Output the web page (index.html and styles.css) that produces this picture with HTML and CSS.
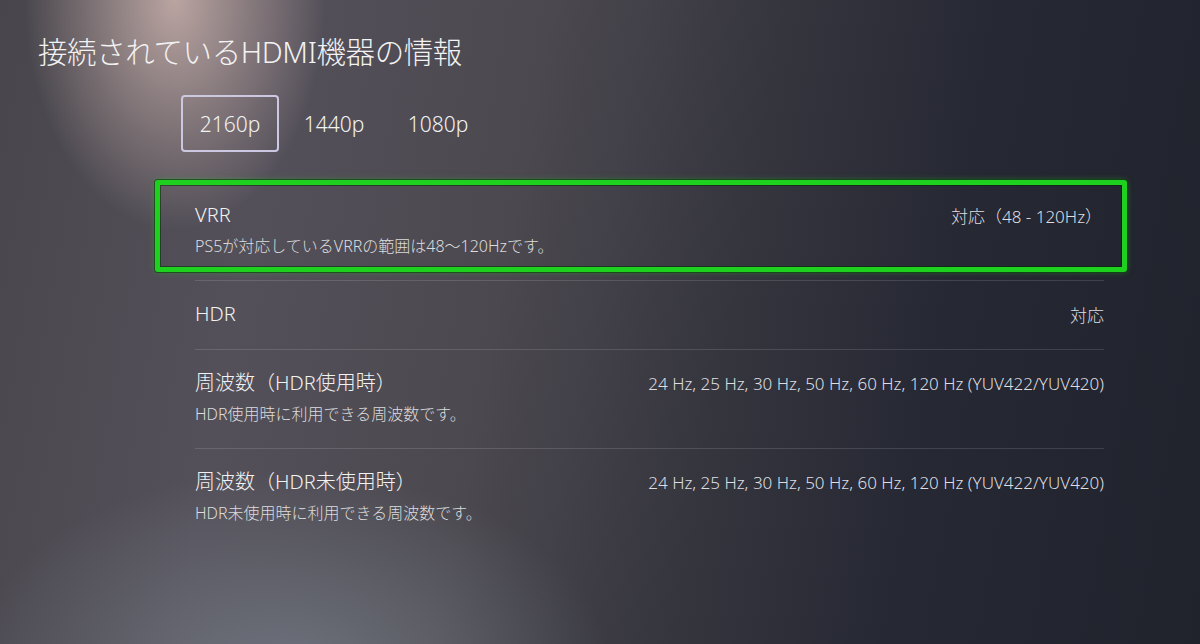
FILE: index.html
```html
<!DOCTYPE html>
<html lang="ja">
<head>
  <meta charset="UTF-8" />
  <meta name="viewport" content="width=device-width, initial-scale=1.0" />
  <title>接続されているHDMI機器の情報</title>
  <link rel="stylesheet" href="styles.css">
</head>
<body>

  <h1>接続されているHDMI機器の情報</h1>

  <div class="tabs">
    <div class="tab active">2160p</div>
    <div class="tab">1440p</div>
    <div class="tab">1080p</div>
  </div>

  <div class="info-list">
    <div class="row row-focus">
      <div class="focus">
        <div class="row-head">
          <span class="row-title">VRR</span>
          <span class="row-value">対応（48 - 120Hz）</span>
        </div>
        <div class="row-desc">PS5が対応しているVRRの範囲は48～120Hzです。</div>
      </div>
    </div>

    <div class="row">
      <div class="row-head">
        <span class="row-title">HDR</span>
        <span class="row-value">対応</span>
      </div>
    </div>

    <div class="row">
      <div class="row-head">
        <span class="row-title">周波数（HDR使用時）</span>
        <span class="row-value">24 Hz, 25 Hz, 30 Hz, 50 Hz, 60 Hz, 120 Hz (YUV422/YUV420)</span>
      </div>
      <div class="row-desc">HDR使用時に利用できる周波数です。</div>
    </div>

    <div class="row last">
      <div class="row-head">
        <span class="row-title">周波数（HDR未使用時）</span>
        <span class="row-value">24 Hz, 25 Hz, 30 Hz, 50 Hz, 60 Hz, 120 Hz (YUV422/YUV420)</span>
      </div>
      <div class="row-desc">HDR未使用時に利用できる周波数です。</div>
    </div>
  </div>

</body>
</html>
```

FILE: styles.css
```css
* {
  box-sizing: border-box;
}

html,
body {
  height: 100%;
}

body {
  margin: 0;
  padding: 32px 0 0 38px;
  overflow: hidden;
  font-family: "Noto Sans", "Noto Sans CJK JP", sans-serif;
  font-weight: 300;
  color: #f2f2f2;
  background:
    radial-gradient(ellipse 150px 230px at 175px 0, rgba(205, 180, 175, 0.85), rgba(205, 180, 175, 0)),
    radial-gradient(ellipse 320px 200px at 290px 670px, rgba(122, 130, 140, 0.7), rgba(122, 130, 140, 0)),
    linear-gradient(100deg, #48464c 0%, #54505a 22%, #4b484f 42%, #35353e 60%, #262833 76%, #20222c 100%);
}

h1 {
  margin: 0;
  font-size: 29.5px;
  line-height: 40px;
  font-weight: 300;
  letter-spacing: -0.4px;
}

/* resolution tabs */
.tabs {
  display: flex;
  gap: 6px;
  margin: 23px 0 0 143px;
}

.tab {
  width: 98px;
  height: 57px;
  display: flex;
  align-items: center;
  justify-content: center;
  font-size: 21px;
  border: 2px solid transparent;
  border-radius: 4px;
}

.tab.active {
  border-color: #cdc8e2;
}

/* settings list */
.info-list {
  margin: 28px 0 0 157px;
  width: 909px;
}

.row {
  padding: 21px 0 23px;
  border-bottom: 1px solid rgba(255, 255, 255, 0.13);
}

.row.last {
  border-bottom: none;
}

.row-focus {
  padding: 0 0 9px;
  margin: 0 -23px 0 -40px;
  border-bottom: none;
  position: relative;
}

.row-focus::after {
  content: "";
  position: absolute;
  left: 40px;
  right: 23px;
  bottom: 0;
  border-bottom: 1px solid rgba(255, 255, 255, 0.13);
}

.focus {
  padding: 18px 20px 10px 35px;
  border: 5px solid #1fd11f;
  border-radius: 3px;
  box-shadow: 0 0 0 1px rgba(10, 70, 10, 0.7), 0 0 6px rgba(40, 220, 40, 0.35), inset 0 0 0 1px rgba(0, 40, 0, 0.5);
}

.row-head {
  display: flex;
  justify-content: space-between;
  align-items: center;
  height: 24px;
}

.row-title {
  font-size: 20px;
  line-height: 24px;
}

.row-value {
  font-size: 17px;
  color: #dedee2;
}

.row-desc {
  margin-top: 8px;
  font-size: 16px;
  line-height: 22px;
  color: #dcdcdc;
}
```
